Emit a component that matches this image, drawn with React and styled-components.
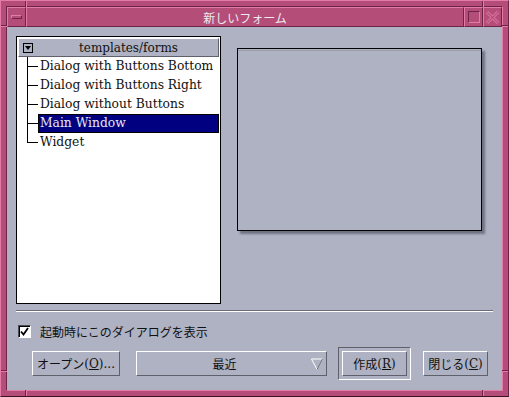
import React from "react";
import styled, { createGlobalStyle } from "styled-components";

const PINK = "#b44e78";
const PINK_LIGHT = "#e47aa6";
const PINK_DARK = "#6e2446";
const BG = "#aeb2c3";
const SHADE = "#5e606c";

const Global = createGlobalStyle`
  html, body { margin: 0; padding: 0; background: ${BG}; }
  * { box-sizing: border-box; }
`;

const Window = styled.div`
  position: relative;
  width: 509px;
  height: 397px;
  background: ${PINK};
  border-top: 1px solid ${PINK_LIGHT};
  border-left: 1px solid ${PINK_LIGHT};
  border-right: 1px solid ${PINK_DARK};
  border-bottom: 1px solid #3a1426;
  padding: 5px 5px 5px 5px;
  display: flex;
  flex-direction: column;
`;

const InnerFrame = styled.div`
  flex: 1;
  display: flex;
  flex-direction: column;
  border-top: 1px solid ${PINK_DARK};
  border-left: 1px solid ${PINK_DARK};
  border-right: 1px solid ${PINK_LIGHT};
  border-bottom: 1px solid ${PINK_LIGHT};
`;

const CornerTick = styled.div`
  position: absolute;
  background: ${PINK_DARK};
  border-${(p) => (p.$v ? "right" : "bottom")}: 1px solid ${PINK_LIGHT};
  ${(p) =>
    p.$v
      ? `width: 2px; height: 6px;`
      : `width: 6px; height: 2px;`}
`;

const TitleBar = styled.div`
  height: 20px;
  display: flex;
  background: ${PINK};
`;

const TitleButton = styled.div`
  width: ${(p) => p.$w}px;
  height: 20px;
  display: flex;
  align-items: center;
  justify-content: center;
  border-top: 1px solid ${PINK_LIGHT};
  border-left: 1px solid ${PINK_LIGHT};
  border-right: 1px solid ${PINK_DARK};
  border-bottom: 1px solid ${PINK_DARK};
`;

const TitleText = styled.div`
  flex: 1;
  display: flex;
  align-items: center;
  justify-content: center;
  color: #ececf0;
  font-family: "Noto Sans CJK JP", sans-serif;
  font-size: 12px;
  border-top: 1px solid ${PINK_LIGHT};
  border-left: 1px solid ${PINK_LIGHT};
  border-right: 1px solid ${PINK_DARK};
  border-bottom: 1px solid ${PINK_DARK};
`;

const MinGlyph = styled.div`
  width: 11px;
  height: 4px;
  border-top: 1px solid ${PINK_LIGHT};
  border-left: 1px solid ${PINK_LIGHT};
  border-right: 1px solid ${PINK_DARK};
  border-bottom: 1px solid ${PINK_DARK};
`;

const MaxGlyph = styled.div`
  width: 12px;
  height: 12px;
  border-top: 1px solid ${PINK_DARK};
  border-left: 1px solid ${PINK_DARK};
  border-right: 1px solid ${PINK_LIGHT};
  border-bottom: 1px solid ${PINK_LIGHT};
`;

const Content = styled.div`
  flex: 1;
  background: ${BG};
  padding: 9px 9px 0 9px;
  display: flex;
  flex-direction: column;
`;

const TopRow = styled.div`
  display: flex;
  gap: 16px;
  align-items: flex-start;
`;

const ListBox = styled.div`
  width: 205px;
  height: 268px;
  background: #fff;
  border: 1px solid #000;
  display: flex;
  flex-direction: column;
`;

const ListHeader = styled.div`
  height: 19px;
  margin: 1px 1px 0 1px;
  background: ${BG};
  border-top: 1px solid #ffffff;
  border-left: 1px solid #ffffff;
  border-right: 1px solid ${SHADE};
  border-bottom: 1px solid ${SHADE};
  display: flex;
  align-items: center;
  font-family: "DejaVu Serif", serif;
  font-size: 12px;
  color: #111;
`;

const HeaderLabel = styled.div`
  flex: 1;
  text-align: center;
  padding-left: 6px;
`;

const HeaderToggle = styled.div`
  width: 10px;
  height: 10px;
  margin-left: 4px;
  border: 1px solid #000;
  background: ${BG};
  display: flex;
  align-items: center;
  justify-content: center;
  &::after {
    content: "";
    border-left: 3px solid transparent;
    border-right: 3px solid transparent;
    border-top: 4px solid #000;
    margin-top: 1px;
  }
`;

const Items = styled.div`
  display: flex;
  flex-direction: column;
`;

const Item = styled.div`
  height: 19px;
  display: flex;
  align-items: stretch;
  font-family: "DejaVu Serif", serif;
  font-size: 12.3px;
  color: #111;
`;

const TreeGuide = styled.div`
  width: 21px;
  flex-shrink: 0;
  position: relative;
  &::before {
    content: "";
    position: absolute;
    left: 10px;
    top: 0;
    height: ${(p) => (p.$last ? "10px" : "19px")};
    border-left: 1px solid #000;
  }
  &::after {
    content: "";
    position: absolute;
    left: 10px;
    top: 9px;
    width: 11px;
    border-top: 1px solid #000;
  }
`;

const ItemLabel = styled.div`
  flex: 1;
  display: flex;
  align-items: center;
  padding-left: 2px;
  padding-bottom: 1px;
  margin-right: 1px;
  white-space: nowrap;
  ${(p) =>
    p.$selected
      ? `background: #000080; color: #e8e8f0; outline: 1px solid #000; outline-offset: -1px;`
      : ``}
`;

const Preview = styled.div`
  margin-top: 12px;
  width: 245px;
  height: 183px;
  background: ${BG};
  border: 1px solid #000;
  box-shadow: 3px 3px 2px rgba(60, 62, 75, 0.55);
  position: relative;
  &::before {
    content: "";
    position: absolute;
    left: 0;
    right: 0;
    top: 1px;
    border-top: 1px solid #9a9ea8;
  }
`;

const Separator = styled.div`
  margin-top: 6px;
  width: 477px;
  height: 2px;
  border-top: 1px solid #6a6c78;
  border-bottom: 1px solid #ffffff;
`;

const CheckRow = styled.div`
  margin-top: 11px;
  display: flex;
  align-items: center;
  gap: 9px;
  padding-left: 2px;
  height: 16px;
`;

const CheckBox = styled.div`
  width: 13px;
  height: 13px;
  background: #fff;
  border-top: 1px solid #4a4c58;
  border-left: 1px solid #4a4c58;
  border-right: 1px solid #fff;
  border-bottom: 1px solid #fff;
  box-shadow: inset 1px 1px 0 #000;
  display: flex;
  align-items: center;
  justify-content: center;
`;

const CheckLabel = styled.span`
  font-family: "Noto Sans CJK JP", sans-serif;
  font-size: 12px;
  letter-spacing: 0;
  color: #111;
`;

const ButtonRow = styled.div`
  margin-top: 8px;
  display: flex;
  align-items: center;
  padding-left: 16px;
`;

const Button = styled.div`
  width: ${(p) => p.$w}px;
  height: 25px;
  display: flex;
  align-items: center;
  justify-content: center;
  background: ${BG};
  border-top: 1px solid #ffffff;
  border-left: 1px solid #ffffff;
  border-right: 1px solid ${SHADE};
  border-bottom: 1px solid ${SHADE};
  font-family: "Noto Sans CJK JP", sans-serif;
  font-size: 12px;
  color: #111;
  margin-left: ${(p) => p.$ml || 0}px;
  white-space: nowrap;
`;

const DefaultFrame = styled.div`
  margin-left: ${(p) => p.$ml}px;
  padding: 3px;
  border-top: 1px solid ${SHADE};
  border-left: 1px solid ${SHADE};
  border-right: 1px solid #ffffff;
  border-bottom: 1px solid #ffffff;
`;

const Combo = styled.div`
  margin-left: 16px;
  width: 191px;
  height: 25px;
  position: relative;
  display: flex;
  align-items: center;
  justify-content: center;
  padding-right: 14px;
  background: ${BG};
  border-top: 1px solid #ffffff;
  border-left: 1px solid #ffffff;
  border-right: 1px solid ${SHADE};
  border-bottom: 1px solid ${SHADE};
  font-family: "Noto Sans CJK JP", sans-serif;
  font-size: 12px;
  color: #111;
`;

const ComboArrow = styled.svg`
  position: absolute;
  right: 3px;
  top: 6px;
`;

const Mnemonic = styled.span`
  text-decoration: underline;
  font-family: "DejaVu Serif", serif;
`;

const Paren = styled.span`
  font-family: "DejaVu Serif", serif;
`;

const items = [
  "Dialog with Buttons Bottom",
  "Dialog with Buttons Right",
  "Dialog without Buttons",
  "Main Window",
  "Widget",
];

export default function App() {
  return (
    <>
      <Global />
      <Window>
        <CornerTick $v style={{ left: 24, top: 0 }} />
        <CornerTick $v style={{ right: 24, top: 0 }} />
        <CornerTick $v style={{ left: 24, bottom: 0 }} />
        <CornerTick $v style={{ right: 24, bottom: 0 }} />
        <CornerTick style={{ left: 0, top: 24 }} />
        <CornerTick style={{ right: 0, top: 24 }} />
        <CornerTick style={{ left: 0, bottom: 24 }} />
        <CornerTick style={{ right: 0, bottom: 24 }} />
        <InnerFrame>
          <TitleBar>
            <TitleButton $w={19}>
              <MinGlyph />
            </TitleButton>
            <TitleText>新しいフォーム</TitleText>
            <TitleButton $w={19}>
              <MaxGlyph />
            </TitleButton>
            <TitleButton $w={19}>
              <svg width="15" height="15" viewBox="0 0 15 15">
                <path
                  d="M2 2 L13 13 M13 2 L2 13"
                  stroke={PINK_LIGHT}
                  strokeWidth="3"
                  fill="none"
                />
                <path
                  d="M2 2 L13 13 M13 2 L2 13"
                  stroke={PINK}
                  strokeWidth="1.2"
                  fill="none"
                />
              </svg>
            </TitleButton>
          </TitleBar>
          <Content>
            <TopRow>
              <ListBox>
                <ListHeader>
                  <HeaderToggle />
                  <HeaderLabel>templates/forms</HeaderLabel>
                </ListHeader>
                <Items>
                  {items.map((t, i) => (
                    <Item key={t}>
                      <TreeGuide $last={i === items.length - 1} />
                      <ItemLabel $selected={t === "Main Window"}>{t}</ItemLabel>
                    </Item>
                  ))}
                </Items>
              </ListBox>
              <Preview />
            </TopRow>
            <Separator />
            <CheckRow>
              <CheckBox>
                <svg width="9" height="9" viewBox="0 0 9 9">
                  <path
                    d="M1 4.5 L3.5 7.5 L8 1"
                    stroke="#000"
                    strokeWidth="1.8"
                    fill="none"
                  />
                </svg>
              </CheckBox>
              <CheckLabel>起動時にこのダイアログを表示</CheckLabel>
            </CheckRow>
            <ButtonRow>
              <Button $w={88}>
                オープン<Paren>(</Paren>
                <Mnemonic>O</Mnemonic>
                <Paren>)...</Paren>
              </Button>
              <Combo>
                最近
                <ComboArrow width="12" height="12" viewBox="0 0 12 12">
                  <path d="M0.5 1 L11.5 1 L6 11.5 Z" fill="none" stroke="#fff" strokeWidth="1" />
                  <path d="M6 11.5 L11.5 1" stroke={SHADE} strokeWidth="1" />
                </ComboArrow>
              </Combo>
              <DefaultFrame $ml={11}>
                <Button $w={65}>
                  作成<Paren>(</Paren>
                  <Mnemonic>R</Mnemonic>
                  <Paren>)</Paren>
                </Button>
              </DefaultFrame>
              <Button $w={65} $ml={12}>
                閉じる<Paren>(</Paren>
                <Mnemonic>C</Mnemonic>
                <Paren>)</Paren>
              </Button>
            </ButtonRow>
          </Content>
        </InnerFrame>
      </Window>
    </>
  );
}
